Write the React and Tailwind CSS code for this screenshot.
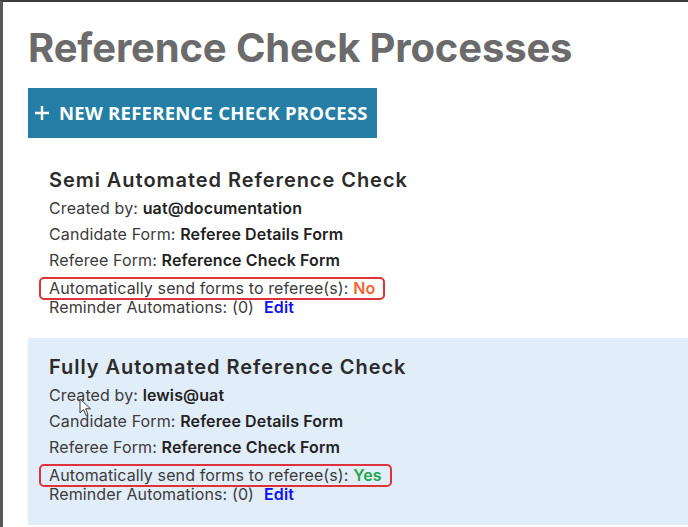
import React from "react";

const processes = [
  {
    name: "Semi Automated Reference Check",
    createdBy: "uat@documentation",
    candidateForm: "Referee Details Form",
    refereeForm: "Reference Check Form",
    autoSend: false,
    reminders: 0,
    shaded: false,
  },
  {
    name: "Fully Automated Reference Check",
    createdBy: "lewis@uat",
    candidateForm: "Referee Details Form",
    refereeForm: "Reference Check Form",
    autoSend: true,
    reminders: 0,
    shaded: true,
  },
];

const Cursor = () => (
  <svg
    className="absolute left-[76px] top-[396px] pointer-events-none"
    width="14"
    height="20"
    viewBox="0 0 14 20"
  >
    <path
      d="M1 1 L1 15 L4.5 11.5 L7 17.5 L9 16.6 L6.6 10.8 L11.5 10.8 Z"
      fill="#ffffff"
      stroke="#3a3a3a"
      strokeWidth="1"
      strokeLinejoin="round"
    />
  </svg>
);

const ProcessCard = ({ process }) => {
  return (
    <div
      className={`${
        process.shaded ? "bg-[#e1edf8]" : "bg-white"
      } h-[187px] pl-[21px] pt-[16px] text-[16px] tracking-[0.12px] text-[#3b3b3b]`}
    >
      <div className="text-[20px] font-semibold leading-[26px] text-[#2b2b2b] tracking-[0.95px]">
        {process.name}
      </div>
      <div className="mt-[2px] h-[26px] leading-[26px]">
        Created by: <span className="font-semibold text-[#222]">{process.createdBy}</span>
      </div>
      <div className="h-[26px] leading-[26px]">
        Candidate Form:{" "}
        <span className="font-semibold text-[#222]">{process.candidateForm}</span>
      </div>
      <div className="h-[26px] leading-[26px]">
        Referee Form:{" "}
        <span className="font-semibold text-[#222]">{process.refereeForm}</span>
      </div>
      <div className="h-[26px] pt-[3px]">
        <span className="inline-flex items-center h-[23px] -ml-[10px] pl-[8px] pr-[8px] border-[2.5px] border-[#e0323b] rounded-[5px]">
          Automatically send forms to referee(s):&nbsp;
          {process.autoSend ? (
            <span className="font-semibold text-[#23a54a]">Yes</span>
          ) : (
            <span className="font-semibold text-[#f2652d]">No</span>
          )}
        </span>
      </div>
      <div className="leading-[16px]">
        Reminder Automations: ({process.reminders})
        <span className="ml-[10px] font-semibold text-[#1010f0]">Edit</span>
      </div>
    </div>
  );
};

export default function App() {
  return (
    <div
      className="relative h-[527px] w-[688px] overflow-hidden bg-white border-l-[3px] border-t-2 border-l-[#585858] border-t-[#3c3c3c]"
      style={{ fontFamily: "Inter, 'Noto Sans', sans-serif" }}
    >
      <div className="pl-[25px] pt-[20px]">
        <h1 className="text-[40px] font-bold leading-[52px] text-[#6b6b6b] tracking-[-0.15px]">
          Reference Check Processes
        </h1>
        <button
          className="mt-[14px] flex h-[50px] w-[349px] items-center bg-[#257ea5] pl-[6px] text-white"
          style={{ fontFamily: "'Open Sans', 'Liberation Sans', sans-serif" }}
        >
          <svg width="16" height="16" viewBox="0 0 16 16" className="mr-[9px]">
            <path d="M8 1v14M1 8h14" stroke="#ffffff" strokeWidth="2.4" />
          </svg>
          <span className="text-[18.5px] font-bold tracking-[0.25px]">
            NEW REFERENCE CHECK PROCESS
          </span>
        </button>
        <div className="mt-[13px]">
          {processes.map((p) => (
            <ProcessCard key={p.name} process={p} />
          ))}
        </div>
      </div>
      <Cursor />
    </div>
  );
}
